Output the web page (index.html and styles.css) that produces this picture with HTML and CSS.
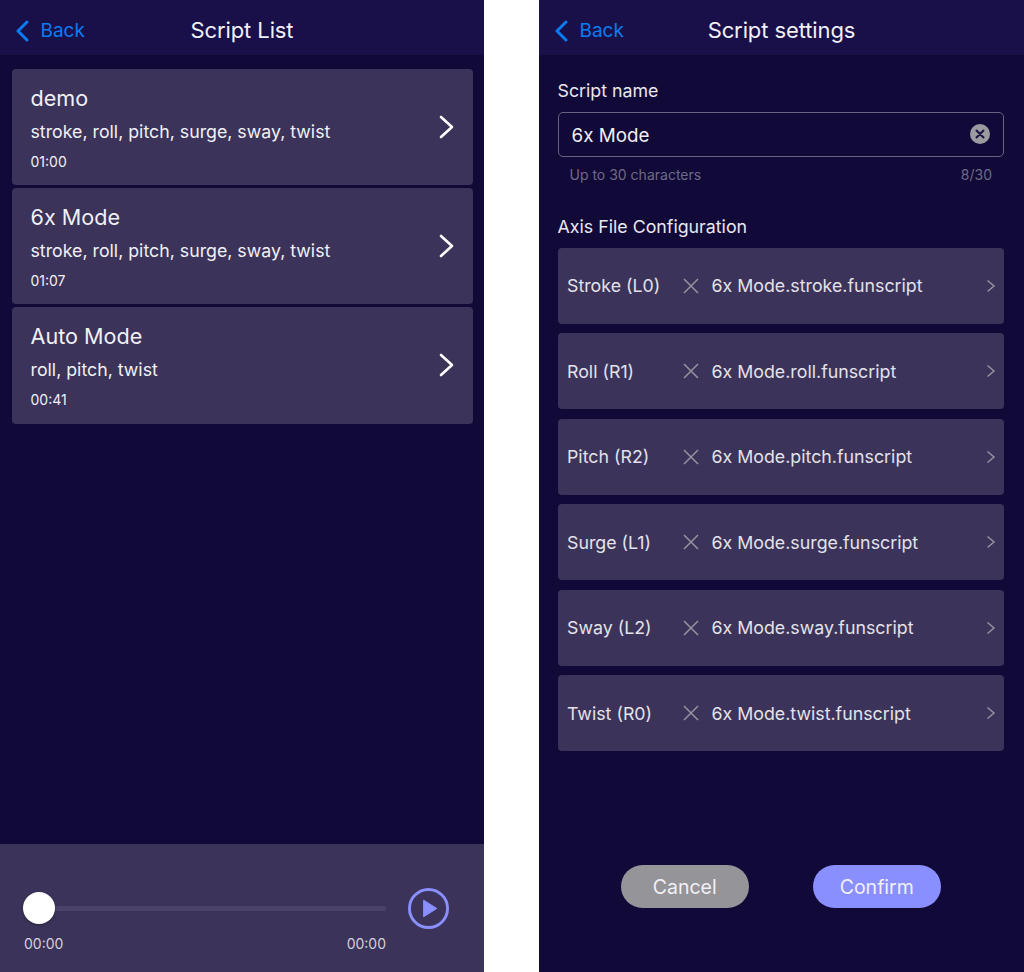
FILE: index.html
```html
<!DOCTYPE html>
<html lang="en">
<head>
<meta charset="utf-8">
<title>Script screens</title>
<link rel="stylesheet" href="styles.css">
</head>
<body>
<main class="screens">
  <section class="panel">
    <header class="topbar">
      <a class="back"><svg class="back-icon" viewBox="0 0 14 22"><path d="M12 2 3 11l9 9"/></svg><span class="back-text">Back</span></a>
      <h1 class="title">Script List</h1>
    </header>
    <div class="list">
      <article class="script">
        <div class="script-text"><h2 class="script-name">demo</h2><p class="script-axes">stroke, roll, pitch, surge, sway, twist</p><p class="script-time">01:00</p></div>
        <svg class="script-chevron" viewBox="0 0 16 24"><path d="M2 2l11 10L2 22"/></svg>
      </article>
      <article class="script">
        <div class="script-text"><h2 class="script-name">6x Mode</h2><p class="script-axes">stroke, roll, pitch, surge, sway, twist</p><p class="script-time">01:07</p></div>
        <svg class="script-chevron" viewBox="0 0 16 24"><path d="M2 2l11 10L2 22"/></svg>
      </article>
      <article class="script">
        <div class="script-text"><h2 class="script-name">Auto Mode</h2><p class="script-axes">roll, pitch, twist</p><p class="script-time">00:41</p></div>
        <svg class="script-chevron" viewBox="0 0 16 24"><path d="M2 2l11 10L2 22"/></svg>
      </article>
    </div>
    <footer class="player">
      <div class="timeline">
        <div class="track"><span class="knob"></span></div>
        <div class="times"><span>00:00</span><span>00:00</span></div>
      </div>
      <svg class="play" viewBox="0 0 42 42"><circle cx="21" cy="21" r="19.5"/><path d="M16 12.500 29.500 21 16 29.500z"/></svg>
    </footer>
  </section>

  <section class="panel">
    <header class="topbar">
      <a class="back"><svg class="back-icon" viewBox="0 0 14 22"><path d="M12 2 3 11l9 9"/></svg><span class="back-text">Back</span></a>
      <h1 class="title">Script settings</h1>
    </header>
    <div class="settings">
      <h3 class="label">Script name</h3>
      <div class="input">
        <span class="input-text">6x Mode</span>
        <svg class="clear" viewBox="0 0 20 20"><circle cx="10" cy="10" r="10"/><path d="M6.500 6.500l7 7M13.500 6.500l-7 7"/></svg>
      </div>
      <div class="hint"><span>Up to 30 characters</span><span>8/30</span></div>
      <h3 class="label axis-label">Axis File Configuration</h3>
      <div class="axes">
        <div class="axis"><span class="axis-name">Stroke (L0)</span><svg class="axis-x" viewBox="0 0 18 18"><path d="M2 2l14 14M16 2 2 16"/></svg><span class="axis-file">6x Mode.stroke.funscript</span><svg class="axis-chevron" viewBox="0 0 10 14"><path d="M1.500 1.500 8 7l-6.500 5.500"/></svg></div>
        <div class="axis"><span class="axis-name">Roll (R1)</span><svg class="axis-x" viewBox="0 0 18 18"><path d="M2 2l14 14M16 2 2 16"/></svg><span class="axis-file">6x Mode.roll.funscript</span><svg class="axis-chevron" viewBox="0 0 10 14"><path d="M1.500 1.500 8 7l-6.500 5.500"/></svg></div>
        <div class="axis"><span class="axis-name">Pitch (R2)</span><svg class="axis-x" viewBox="0 0 18 18"><path d="M2 2l14 14M16 2 2 16"/></svg><span class="axis-file">6x Mode.pitch.funscript</span><svg class="axis-chevron" viewBox="0 0 10 14"><path d="M1.500 1.500 8 7l-6.500 5.500"/></svg></div>
        <div class="axis"><span class="axis-name">Surge (L1)</span><svg class="axis-x" viewBox="0 0 18 18"><path d="M2 2l14 14M16 2 2 16"/></svg><span class="axis-file">6x Mode.surge.funscript</span><svg class="axis-chevron" viewBox="0 0 10 14"><path d="M1.500 1.500 8 7l-6.500 5.500"/></svg></div>
        <div class="axis"><span class="axis-name">Sway (L2)</span><svg class="axis-x" viewBox="0 0 18 18"><path d="M2 2l14 14M16 2 2 16"/></svg><span class="axis-file">6x Mode.sway.funscript</span><svg class="axis-chevron" viewBox="0 0 10 14"><path d="M1.500 1.500 8 7l-6.500 5.500"/></svg></div>
        <div class="axis"><span class="axis-name">Twist (R0)</span><svg class="axis-x" viewBox="0 0 18 18"><path d="M2 2l14 14M16 2 2 16"/></svg><span class="axis-file">6x Mode.twist.funscript</span><svg class="axis-chevron" viewBox="0 0 10 14"><path d="M1.500 1.500 8 7l-6.500 5.500"/></svg></div>
      </div>
      <div class="actions">
        <button class="btn btn-cancel">Cancel</button>
        <button class="btn btn-confirm">Confirm</button>
      </div>
    </div>
  </section>
</main>
</body>
</html>
```

FILE: styles.css
```css
* { box-sizing: border-box; }
html, body { margin: 0; height: 972px; background: #fff; overflow: hidden; }
body { font-family: Inter, "Liberation Sans", sans-serif; color: #f1f0f5; }
.screens { display: grid; grid-template-columns: 484px 485px; justify-content: space-between; height: 972px; }
.panel { display: flex; flex-direction: column; background: #110938; height: 972px; }
.topbar { position: relative; height: 55px; flex: none; background: #1a1049; display: flex; align-items: center; justify-content: center; }
.back { position: absolute; left: 15px; top: 18px; display: flex; align-items: center; gap: 11.500px; color: #0a7cf2; font-size: 19px; line-height: 24px; }
.back-text { padding-top: 1px; }
.back-icon { width: 14px; height: 22px; fill: none; stroke: currentColor; stroke-width: 3; stroke-linecap: round; stroke-linejoin: round; }
.title { margin: 5px 0 0; font-size: 22px; line-height: 28px; font-weight: 400; letter-spacing: -.1px; }

.list { flex: 1; padding: 13.500px 11.500px 0; display: flex; flex-direction: column; gap: 2.750px; }
.script { height: 116.500px; background: #3b3359; border-radius: 4px; padding: 0 18px 0 19px; display: flex; align-items: center; justify-content: space-between; }
.script-text { padding-top: 1px; }
.script-name { margin: 0 0 8px; font-size: 21.600px; line-height: 28px; font-weight: 400; }
.script-axes { margin: 0 0 9px; font-size: 17.750px; line-height: 24px; }
.script-time { margin: 0; font-size: 14px; line-height: 18px; }
.script-chevron { width: 16px; height: 24px; fill: none; stroke: #fff; stroke-width: 2.600; stroke-linecap: round; stroke-linejoin: round; }

.player { height: 128px; flex: none; background: #3b3359; padding: 46px 35px 0 24px; display: flex; align-items: flex-start; gap: 22px; }
.timeline { flex: 1; }
.track { position: relative; height: 5px; margin-top: 15.500px; background: #4a4268; border-radius: 3px; }
.knob { position: absolute; left: -1px; top: -13.500px; width: 32px; height: 32px; border-radius: 50%; background: #fff; box-shadow: 0 1px 3px rgba(0,0,0,.3); }
.times { display: flex; justify-content: space-between; margin-top: 24px; font-size: 14px; line-height: 18px; color: #d3d0de; }
.play { width: 41px; height: 41px; flex: none; margin-top: -2.500px; }
.play circle { fill: none; stroke: #8a8fff; stroke-width: 3; }
.play path { fill: #8a8fff; stroke: #8a8fff; stroke-width: 1; stroke-linejoin: round; }

.settings { flex: 1; padding: 25px 20px 0 18.500px; display: flex; flex-direction: column; }
.label { margin: 0; font-size: 17.800px; line-height: 22px; font-weight: 400; color: #e9e8ef; }
.input { height: 45px; margin-top: 9.500px; border: 1.500px solid #69637f; border-radius: 5px; padding: 0 13px; display: flex; align-items: center; justify-content: space-between; font-size: 18.800px; }
.input-text { padding-top: 2px; }
.clear { width: 20px; height: 20px; }
.clear circle { fill: #9b9aa0; }
.clear path { stroke: #1a1240; stroke-width: 2; stroke-linecap: round; }
.hint { display: flex; justify-content: space-between; padding: 0 12px; margin-top: 9px; font-size: 14px; line-height: 17px; color: #6f6a86; }
.axis-label { margin-top: 33px; }
.axes { display: flex; flex-direction: column; gap: 9.500px; margin-top: 10px; }
.axis { height: 76px; background: #3b3359; border-radius: 4px; padding: 0 8px 0 9.500px; display: flex; align-items: center; font-size: 17.800px; color: #e4e2ea; }
.axis-name { width: 115px; flex: none; }
.axis-x { width: 18px; height: 18px; flex: none; fill: none; stroke: #96939f; stroke-width: 1.500; }
.axis-file { flex: 1; margin-left: 11.500px; }
.axis-chevron { width: 10px; height: 14px; fill: none; stroke: #96939f; stroke-width: 1.500; }
.actions { display: flex; justify-content: center; gap: 64px; margin-top: 114px; }
.btn { width: 128px; height: 43px; border: 0; border-radius: 22px; font: 400 19.500px Inter, "Liberation Sans", sans-serif; color: #f1f0f5; padding: 0; }
.btn-cancel { background: #959498; }
.btn-confirm { background: #8a8fff; }
```
